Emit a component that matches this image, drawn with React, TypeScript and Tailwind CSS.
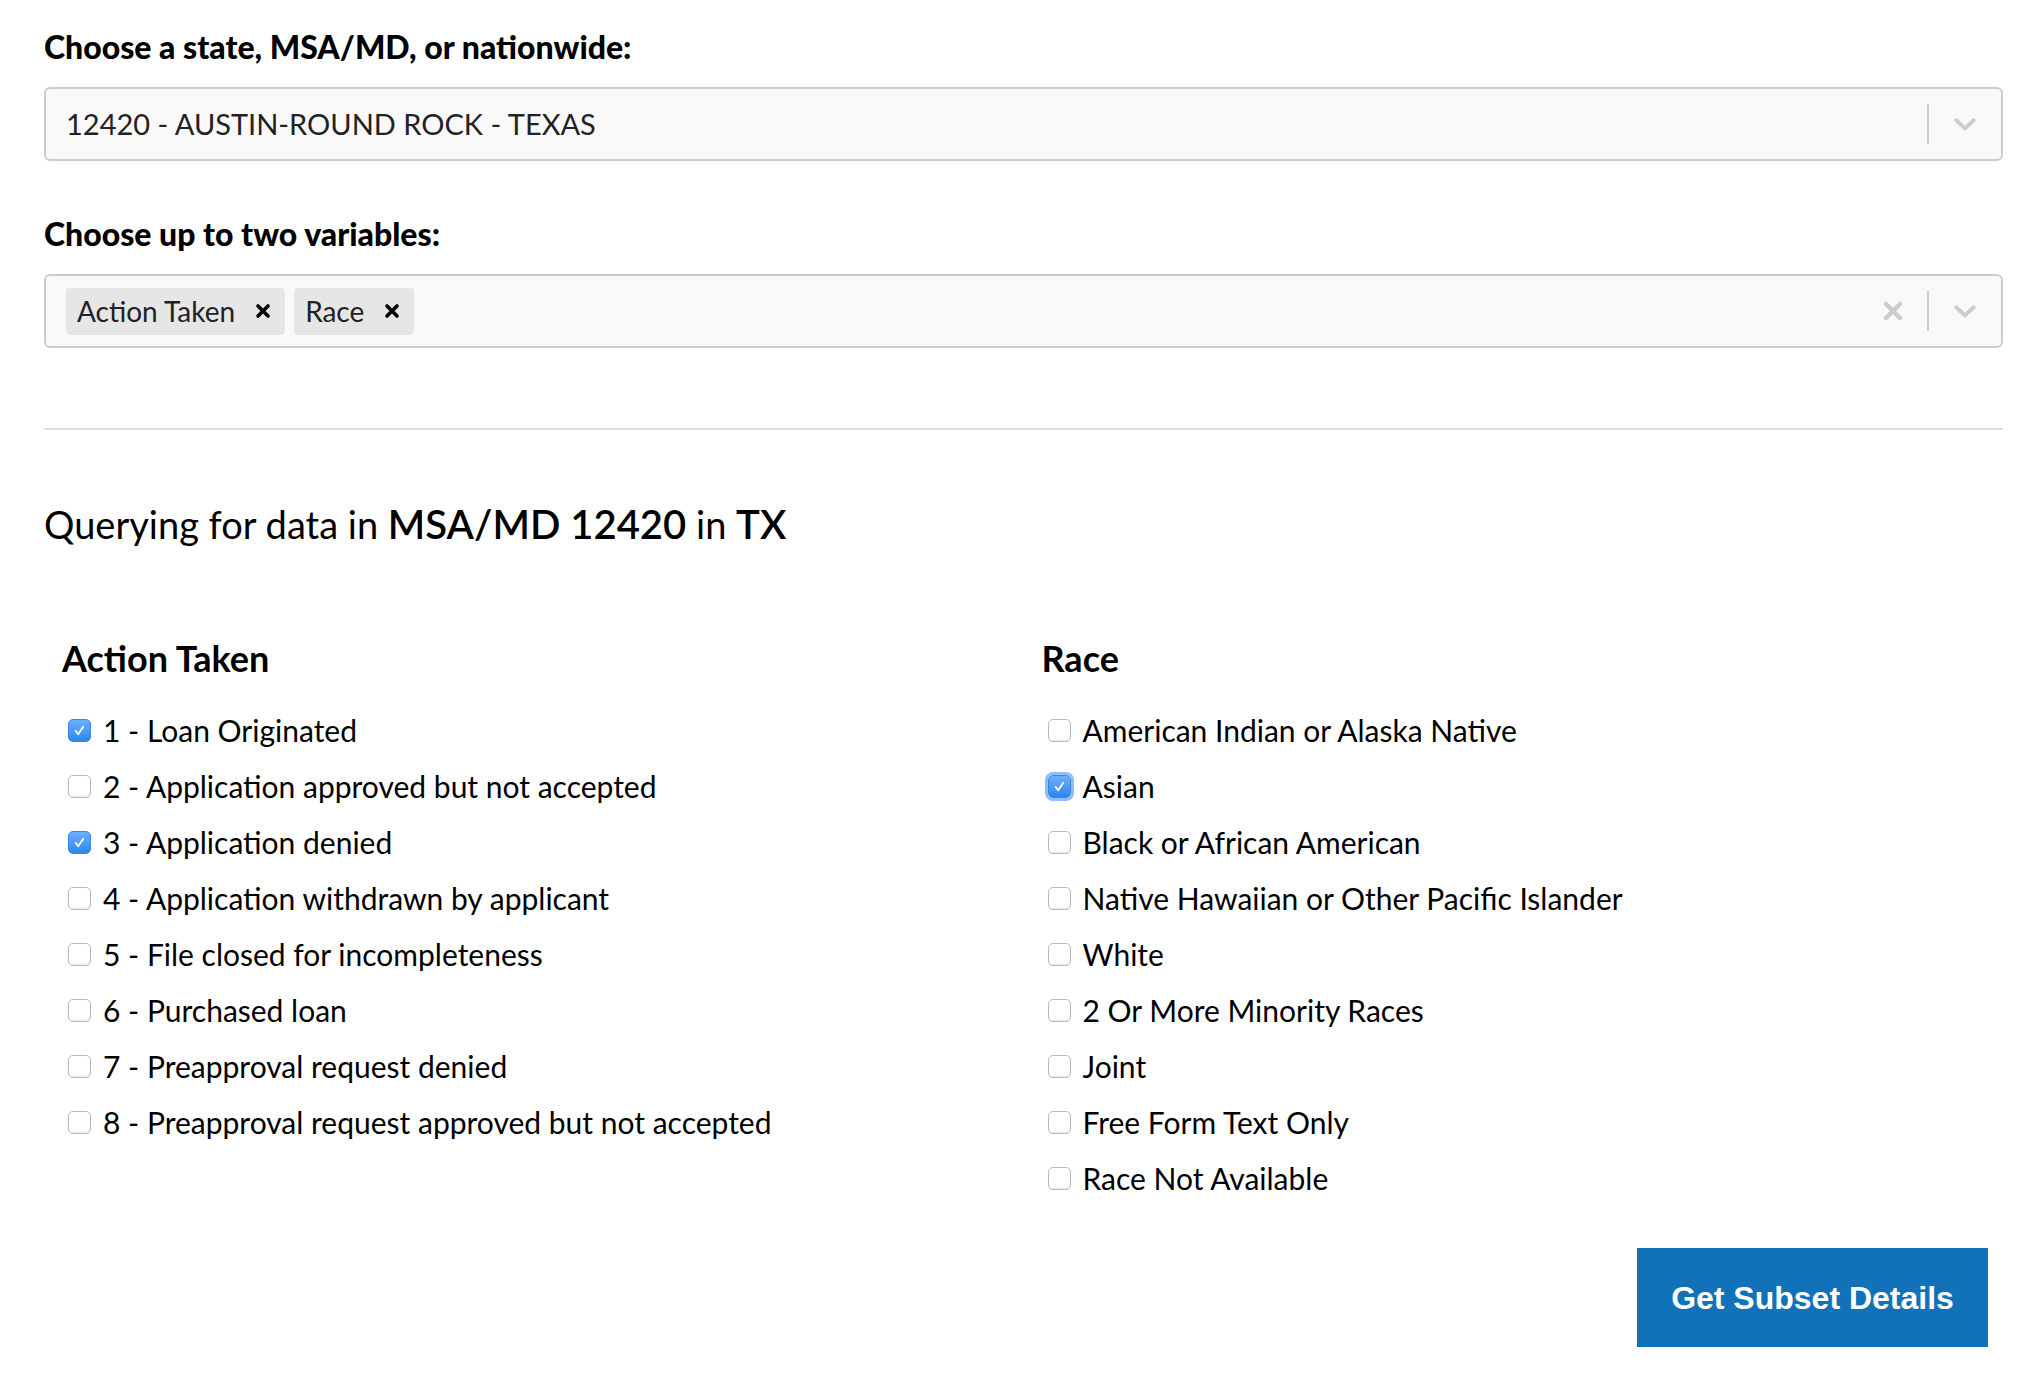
const actions = [
  { label: '1 - Loan Originated', checked: true },
  { label: '2 - Application approved but not accepted', checked: false },
  { label: '3 - Application denied', checked: true },
  { label: '4 - Application withdrawn by applicant', checked: false },
  { label: '5 - File closed for incompleteness', checked: false },
  { label: '6 - Purchased loan', checked: false },
  { label: '7 - Preapproval request denied', checked: false },
  { label: '8 - Preapproval request approved but not accepted', checked: false },
];

const races = [
  { label: 'American Indian or Alaska Native', checked: false },
  { label: 'Asian', checked: true, focus: true },
  { label: 'Black or African American', checked: false },
  { label: 'Native Hawaiian or Other Pacific Islander', checked: false },
  { label: 'White', checked: false },
  { label: '2 Or More Minority Races', checked: false },
  { label: 'Joint', checked: false },
  { label: 'Free Form Text Only', checked: false },
  { label: 'Race Not Available', checked: false },
];

function Chevron() {
  return (
    <svg viewBox="0 0 24 24" className="h-[30px] w-[30px] text-[#cccccc]" fill="none" stroke="currentColor" strokeWidth="3.2" strokeLinecap="round" strokeLinejoin="round">
      <path d="M5 9l7 6.5L19 9" />
    </svg>
  );
}

function Cross({ className, width = 3.2 }: { className: string; width?: number }) {
  return (
    <svg viewBox="0 0 20 20" className={className} fill="none" stroke="currentColor" strokeWidth={width} strokeLinecap="round">
      <path d="M5 5l10 10M15 5L5 15" />
    </svg>
  );
}

function Box({ checked, focus }: { checked: boolean; focus?: boolean }) {
  if (checked) {
    return (
      <span
        className={`flex h-[23px] w-[23px] shrink-0 items-center justify-center rounded-[5px] border border-[#3a85e6] bg-gradient-to-b from-[#6cb0fb] to-[#2f84f0] ${
          focus ? 'ring-[3px] ring-[#8fbdf7]' : ''
        }`}
      >
        <svg viewBox="0 0 16 16" className="h-[15px] w-[15px]" fill="none" stroke="white" strokeWidth="2" strokeLinecap="round" strokeLinejoin="round">
          <path d="M4 8.5l2.6 3.5L12 4" />
        </svg>
      </span>
    );
  }
  return (
    <span className="block h-[23px] w-[23px] shrink-0 rounded-[5px] border border-[#b9b9b9] bg-white shadow-[inset_0_-1px_1px_rgba(0,0,0,0.08)]" />
  );
}

function CheckList({ title, items }: { title: string; items: { label: string; checked: boolean; focus?: boolean }[] }) {
  return (
    <div className="flex-1 px-[18px]">
      <h3 className="text-[36px] font-bold leading-none text-black">{title}</h3>
      <ul className="mt-[26px] flex flex-col">
        {items.map((item) => (
          <li key={item.label} className="flex h-[56px] items-center gap-[12px] text-[30px] text-black">
            <span className="pl-[6px]">
              <Box checked={item.checked} focus={item.focus} />
            </span>
            <span>{item.label}</span>
          </li>
        ))}
      </ul>
    </div>
  );
}

export default function App() {
  return (
    <main className="min-h-screen bg-white px-[44px] pt-[28px] text-black [font-family:Lato,'Liberation_Sans',sans-serif]">
      <div className="w-[1959px]">
        <label className="block text-[32px] font-black leading-[38px]">Choose a state, MSA/MD, or nationwide:</label>
        <div className="mt-[21px] flex h-[74px] items-center rounded-[6px] border-2 border-[#cccccc] bg-[#f9f9f9]">
          <div className="flex-1 pl-[20px] text-[29px] text-[#222222]">12420 - AUSTIN-ROUND ROCK - TEXAS</div>
          <span className="h-[40px] w-[2px] bg-[#cccccc]" />
          <span className="flex w-[72px] items-center justify-center">
            <Chevron />
          </span>
        </div>

        <label className="mt-[54px] block text-[32px] font-black leading-[38px]">Choose up to two variables:</label>
        <div className="mt-[21px] flex h-[74px] items-center rounded-[6px] border-2 border-[#cccccc] bg-[#f9f9f9]">
          <div className="flex flex-1 items-center gap-[9px] pl-[20px]">
            <span className="flex h-[47px] items-center gap-[18px] rounded-[4px] bg-[#e6e6e6] pl-[11px] pr-[12px] text-[28px] text-[#222222]">
              Action Taken
              <Cross className="h-[20px] w-[20px] text-black" width={3.6} />
            </span>
            <span className="flex h-[47px] items-center gap-[18px] rounded-[4px] bg-[#e6e6e6] pl-[11px] pr-[12px] text-[28px] text-[#222222]">
              Race
              <Cross className="h-[20px] w-[20px] text-black" width={3.6} />
            </span>
          </div>
          <span className="flex w-[60px] items-center justify-center pr-[6px]">
            <Cross className="h-[28px] w-[28px] text-[#cccccc]" width={3.2} />
          </span>
          <span className="ml-[1px] h-[40px] w-[2px] bg-[#cccccc]" />
          <span className="flex w-[72px] items-center justify-center">
            <Chevron />
          </span>
        </div>

        <hr className="mt-[80px] border-t-2 border-[#dddddd]" />

        <p className="mt-[70px] text-[38px] leading-[48px] text-black">
          Querying for data in <span className="text-[40px] font-semibold">MSA/MD 12420</span> in{' '}
          <span className="text-[40px] font-semibold">TX</span>
        </p>

        <div className="mt-[92px] flex">
          <CheckList title="Action Taken" items={actions} />
          <CheckList title="Race" items={races} />
        </div>

        <div className="mt-[42px] flex justify-end pr-[15px]">
          <button className="h-[99px] w-[351px] bg-[#1272b9] text-[32px] font-bold text-white [font-family:'Liberation_Sans',Arial,sans-serif]">
            Get Subset Details
          </button>
        </div>
      </div>
    </main>
  );
}
